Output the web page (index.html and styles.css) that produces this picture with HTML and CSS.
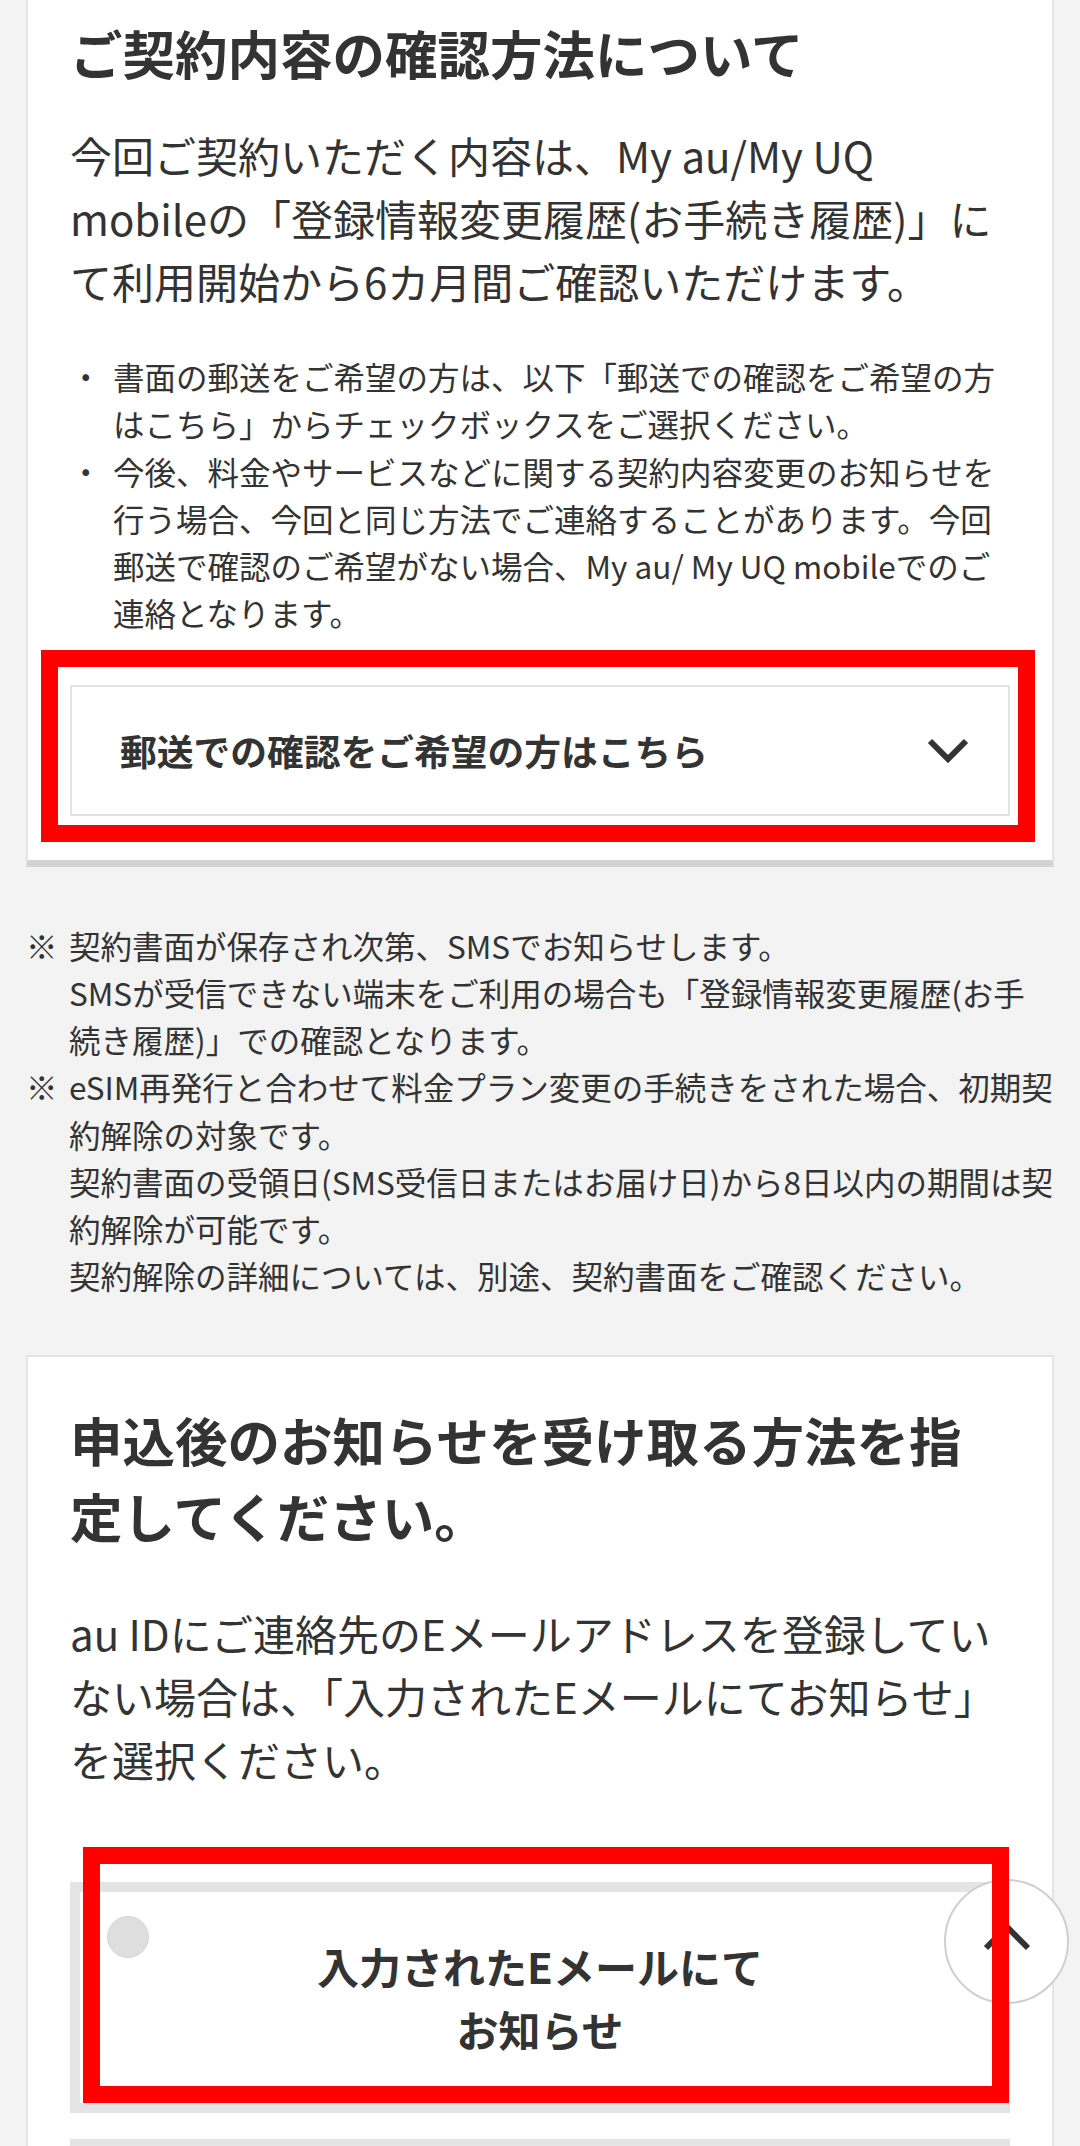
FILE: index.html
```html
<!DOCTYPE html>
<html lang="ja">
<head>
    <meta charset="UTF-8">
    <meta name="viewport" content="width=device-width, initial-scale=1.0">
    <title>お申込み内容の確認</title>
    <link rel="stylesheet" href="styles.css">
</head>
<body>
    <!-- 契約内容の確認方法 -->
    <section class="card card-cont">
        <h2 class="card-title">ご契約内容の確認方法について</h2>
        <p class="lead">今回ご契約いただく内容は、My au/My UQ mobileの「登録情報変更履歴(お手続き履歴)」にて利用開始から6カ月間ご確認いただけます。</p>
        <ul class="bullets">
            <li>書面の郵送をご希望の方は、以下「郵送での確認をご希望の方はこちら」からチェックボックスをご選択ください。</li>
            <li>今後、料金やサービスなどに関する契約内容変更のお知らせを行う場合、今回と同じ方法でご連絡することがあります。今回郵送で確認のご希望がない場合、My au/ My UQ mobileでのご連絡となります。</li>
        </ul>
        <div class="highlight highlight-accordion">
            <button class="accordion" type="button">
                <span>郵送での確認をご希望の方はこちら</span>
                <svg class="chevron" width="42" height="26" viewBox="0 0 42 26">
                    <polyline points="3,4 21,22 39,4" fill="none" stroke="#333" stroke-width="6"/>
                </svg>
            </button>
        </div>
    </section>

    <!-- 注意事項 -->
    <ul class="notes">
        <li>契約書面が保存され次第、SMSでお知らせします。<br>SMSが受信できない端末をご利用の場合も「登録情報変更履歴(お手続き履歴)」での確認となります。</li>
        <li>eSIM再発行と合わせて料金プラン変更の手続きをされた場合、初期契約解除の対象です。<br>契約書面の受領日(SMS受信日またはお届け日)から8日以内の期間は契約解除が可能です。<br>契約解除の詳細については、別途、契約書面をご確認ください。</li>
    </ul>

    <!-- お知らせの受け取り方法 -->
    <section class="card">
        <h2 class="card-title">申込後のお知らせを受け取る方法を指定してください。</h2>
        <p class="lead lead-tight">au IDにご連絡先のEメールアドレスを登録していない場合は、「入力されたEメールにてお知らせ」を選択ください。</p>
        <div class="options">
            <label class="option highlight highlight-option">
                <input type="radio" name="notice" value="input-mail">
                <span class="radio"></span>
                <span class="option-label">入力されたEメールにてお知らせ</span>
            </label>
            <label class="option">
                <input type="radio" name="notice" value="auid-mail">
                <span class="radio"></span>
                <span class="option-label">au IDのEメールにてお知らせ</span>
            </label>
        </div>
    </section>

    <button class="page-top" type="button" aria-label="ページトップへ">
        <svg width="48" height="30" viewBox="0 0 48 30">
            <polyline points="3,24 24,3 45,24" fill="none" stroke="#333" stroke-width="6"/>
        </svg>
    </button>
</body>
</html>
```

FILE: styles.css
```css
* {
    margin: 0;
    padding: 0;
    box-sizing: border-box;
}

body {
    font-family: "Noto Sans CJK JP", sans-serif;
    background: #f3f3f3;
    color: #333;
}

.card {
    margin: 55px 26px 0;
    background: white;
    border: 2px solid #e5e5e5;
    padding: 44px 42px;
}

.card-cont {
    margin-top: 0;
    border-top: 0;
    padding-top: 14px;
    border-bottom: 7px solid #d3d3d3;
}

.card-title {
    font-size: 52.5px;
    line-height: 76px;
    font-weight: bold;
    margin-bottom: 33px;
}

.card + .notes,
.notes + .card {
    margin-top: 55px;
}

.card:not(.card-cont) .card-title {
    margin-bottom: 48px;
}

.lead {
    font-size: 42px;
    line-height: 63px;
    margin-bottom: 41px;
}

.lead-tight {
    margin-bottom: 92px;
}

.bullets,
.notes {
    list-style: none;
    font-size: 31.5px;
    line-height: 47.25px;
}

.bullets {
    margin-bottom: 48px;
}

.bullets li,
.notes li {
    display: flex;
}

.bullets li::before {
    content: "・";
    flex: none;
    width: 43px;
}

.notes {
    padding: 0 26px;
}

.notes li::before {
    content: "※";
    flex: none;
    width: 43px;
}

/* 赤枠（注釈） */
.highlight {
    position: relative;
}

.highlight::after {
    content: "";
    position: absolute;
    border: 17px solid #ff0000;
    pointer-events: none;
    z-index: 20;
}

.highlight-accordion::after {
    top: -35px;
    left: -29px;
    right: -25px;
    bottom: -26px;
}

.highlight-option::after {
    top: -45px;
    left: 3px;
    right: -9px;
    bottom: 0;
}

.accordion {
    width: 100%;
    height: 131px;
    display: flex;
    justify-content: space-between;
    align-items: center;
    padding: 0 39px 0 48px;
    background: white;
    border: 2px solid #e2e2e2;
    font-family: inherit;
    font-size: 36.75px;
    font-weight: bold;
    color: #333;
    text-align: left;
    cursor: pointer;
}

.options {
    display: flex;
    flex-direction: column;
    gap: 26px;
}

.option {
    display: flex;
    align-items: flex-start;
    background: white;
    border: 10px solid #e4e4e4;
    padding: 24px 69px 43px 27px;
    cursor: pointer;
}

.option input {
    display: none;
}

.radio {
    flex: none;
    width: 42px;
    height: 42px;
    border-radius: 50%;
    background: #dedede;
    border: 1px solid #d6d6d6;
}

.option-label {
    flex: 1;
    max-width: 464px;
    margin: 18px auto 0;
    font-size: 42px;
    line-height: 63px;
    font-weight: bold;
    text-align: center;
}

.page-top {
    position: fixed;
    right: 11px;
    bottom: 142px;
    width: 125px;
    height: 125px;
    border-radius: 50%;
    background: white;
    border: 2px solid #cfcfcf;
    display: flex;
    align-items: center;
    justify-content: center;
    z-index: 10;
    cursor: pointer;
}

.page-top svg {
    margin-top: -5px;
}
```
